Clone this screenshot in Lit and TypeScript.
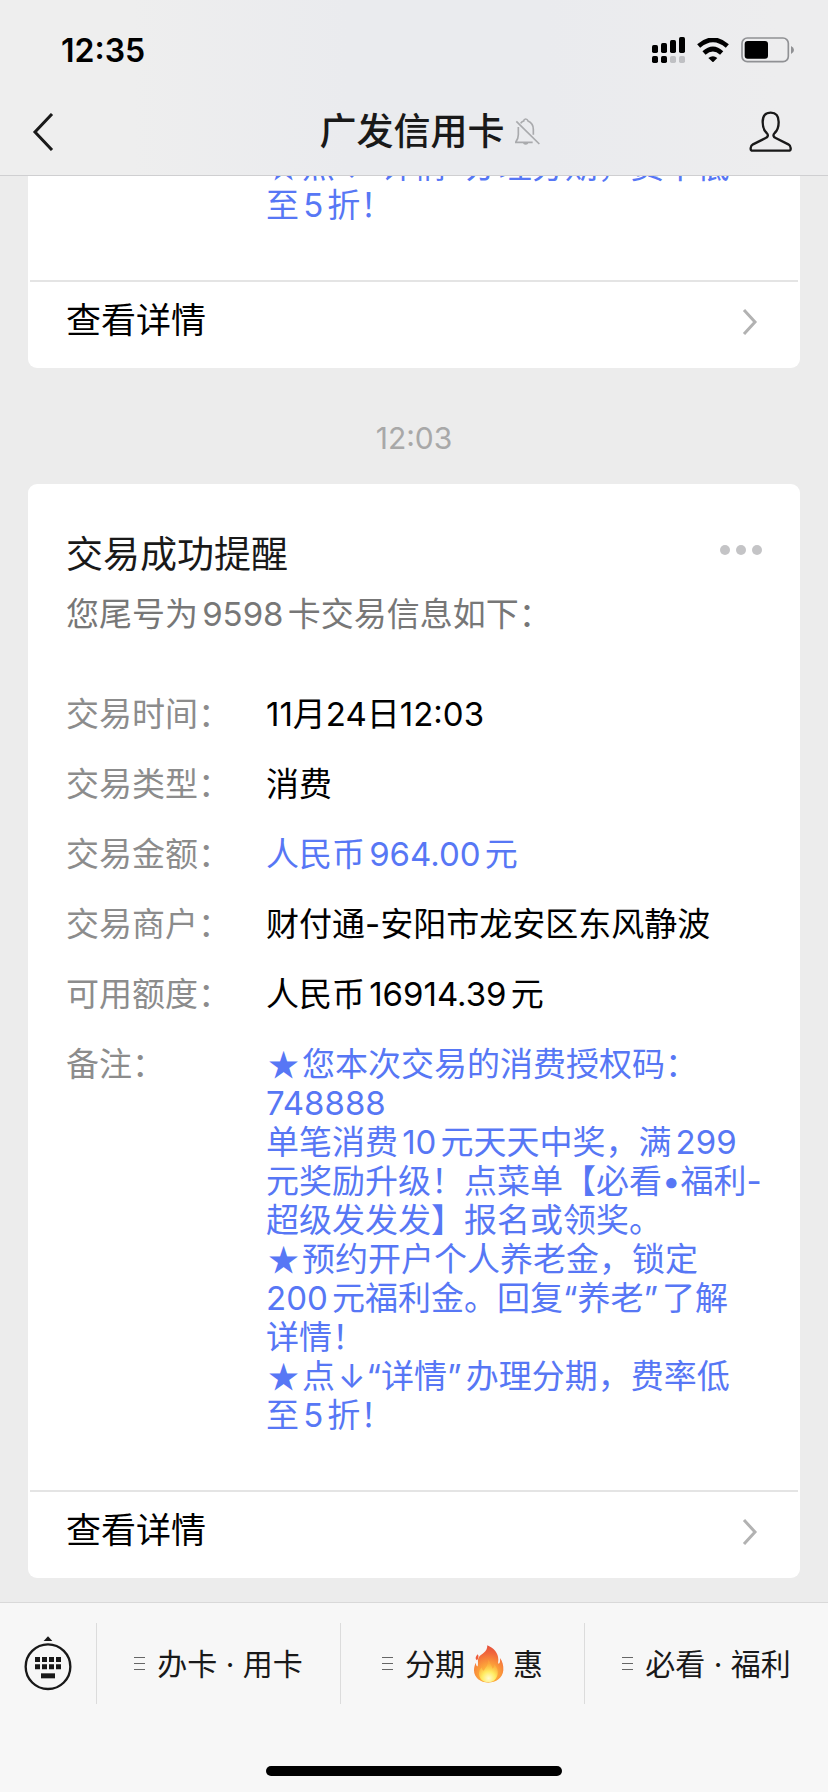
import { LitElement, html, css, svg, nothing } from "lit";
import { customElement, property } from "lit/decorators.js";

interface Row {
  label: string;
  lines: string[];
  accent?: boolean;
  tight?: boolean;
}

const tail = ["★点↓“详情”办理分期，费率低", "至5折！"];

const rows: Row[] = [
  { label: "交易时间：", lines: ["11月24日12:03"], tight: true },
  { label: "交易类型：", lines: ["消费"] },
  { label: "交易金额：", lines: ["人民币964.00元"], accent: true },
  { label: "交易商户：", lines: ["财付通-安阳市龙安区东风静波"] },
  { label: "可用额度：", lines: ["人民币16914.39元"] },
  {
    label: "备注：",
    accent: true,
    lines: [
      "★您本次交易的消费授权码：",
      "748888",
      "单笔消费10元天天中奖，满299",
      "元奖励升级！点菜单【必看•福利-",
      "超级发发发】报名或领奖。",
      "★预约开户个人养老金，锁定",
      "200元福利金。回复“养老”了解",
      "详情！",
      ...tail,
    ],
  },
];

const symbolClass: Record<string, string> = {
  "★": "star",
  "↓": "arrow",
  "”": "close",
};

const bars = [129, 123, 114, 105];

@customElement("status-bar")
class StatusBar extends LitElement {
  static styles = css`
    :host {
      display: flex;
      align-items: center;
      justify-content: space-between;
      height: 76px;
      padding: 12px 34px 0 61px;
    }
    .time {
      font-size: 32px;
      font-weight: 600;
      color: #000;
    }
    .icons {
      display: flex;
      align-items: center;
      gap: 12px;
    }
    svg {
      display: block;
    }
  `;
  render() {
    return html`
      <span class="time">12:35</span>
      <div class="icons">
        <svg width="33" height="26" viewBox="717 105 99 78" aria-label="信号">
          ${bars.map(
            (top, i) => svg`
              <rect x=${717 + i * 27} y=${top} width="18" height=${153 - top} rx="5" />
              <rect x=${717 + i * 27} y="162" width="18" height="21" rx="5" fill=${i > 1 ? "#bfc0c3" : "#000"} />`
          )}
        </svg>
        <svg width="32" height="24" viewBox="851 111 96 72" aria-label="无线网络">
          <path d="M856 135Q899 98 942 135" fill="none" stroke="#000" stroke-width="14" />
          <path d="M872 156Q899 132 925 156" fill="none" stroke="#000" stroke-width="14" />
          <path d="M885 171Q899 160 912 171L899 184Z" />
        </svg>
        <svg width="53" height="26" viewBox="981 110 159 78" aria-label="电量">
          <rect x="984" y="113" width="139" height="71" rx="16" fill="none" stroke="#909194" stroke-width="5" />
          <rect x="992" y="122" width="70" height="53" rx="9" />
          <path d="M1131 137Q1140 141 1140 149T1131 161Z" fill="#909194" />
        </svg>
      </div>
    `;
  }
}

@customElement("nav-bar")
class NavBar extends LitElement {
  static styles = css`
    :host {
      display: grid;
      grid-template-columns: 1fr auto 1fr;
      align-items: center;
      height: 87px;
      padding: 0 36px 0 32px;
    }
    .title {
      margin: 0;
      font-size: 37px;
      line-height: 48px;
      font-weight: 500;
      color: #191919;
    }
    .side {
      display: flex;
      align-items: center;
      justify-content: space-between;
      padding-left: 10px;
    }
    .btn {
      display: block;
      padding: 0;
      border: 0;
      background: none;
      justify-self: start;
    }
    svg {
      display: block;
    }
  `;
  render() {
    return html`
      <button class="btn" aria-label="返回">
        <svg width="22" height="38" viewBox="0 0 22 38" fill="none" stroke="#191919" stroke-width="3">
          <path d="M20 1 3 19 20 37" />
        </svg>
      </button>
      <h1 class="title">广发信用卡</h1>
      <div class="side">
        <svg width="26" height="28" viewBox="301 354 78 84" fill="none" stroke="#a9aaad" stroke-width="5" aria-label="消息免打扰">
          <path d="M305 364 374 432M311 381V404Q311 416 303 427H354M318 370Q321 365 327 363Q328 357 333 357Q338 357 340 363Q356 370 356 388V404M327 429Q333 434 339 429" />
        </svg>
        <button class="btn" aria-label="账户主页">
          <svg width="43" height="42" viewBox="1003 332 129 126" fill="none" stroke="#191919" stroke-width="7" stroke-linejoin="round">
            <path d="M1068 337C1051 337 1044 349 1044 365C1044 381 1048 391 1056 398C1062 404 1060 410 1053 413L1015 432Q1008 436 1008 443V446Q1008 451 1014 451H1122Q1128 451 1128 446V443Q1128 436 1121 432L1083 413C1076 410 1074 404 1080 398C1088 391 1092 381 1092 365C1092 349 1085 337 1068 337Z" />
          </svg>
        </button>
      </div>
    `;
  }
}

@customElement("notice-card")
class NoticeCard extends LitElement {
  @property() heading = "";
  @property() intro = "";
  @property({ attribute: false }) rows: Row[] = [];

  static styles = css`
    :host {
      display: block;
      flex: none;
      margin: 0 28px;
      border-radius: 9px;
      background: #fff;
    }
    .head {
      display: flex;
      justify-content: space-between;
      padding: 46px 38px 0;
    }
    .heading {
      margin: 0;
      font-size: 37px;
      line-height: 50px;
      font-weight: 400;
      color: #191919;
    }
    .more {
      display: flex;
      align-items: center;
      align-self: flex-start;
      gap: 6px;
      height: 40px;
      padding: 0;
      border: 0;
      background: none;
    }
    .dot {
      width: 10px;
      height: 10px;
      border-radius: 50%;
      background: #c4c4c6;
    }
    .intro {
      margin: 15px 38px 61px;
      font-size: 33px;
      line-height: 39px;
      color: #777;
    }
    .rows {
      display: grid;
      grid-template-columns: 200px 1fr;
      row-gap: 31px;
      margin: 0;
      padding: 0 0 55px 38px;
      font-size: 33px;
      line-height: 39px;
    }
    .label {
      color: #8c8c8c;
    }
    .value {
      margin: 0;
      white-space: pre;
      color: #000;
    }
    .accent {
      color: #5777f5;
    }
    .tight {
      text-autospace: no-autospace;
    }
    .star {
      padding: 0 3px 0 2px;
      font-family: "Noto Sans CJK SC", sans-serif;
      font-size: 31px;
      font-weight: 700;
      line-height: 0;
    }
    .arrow {
      padding: 0 1px 0 3px;
    }
    .close {
      padding-right: 4px;
    }
    .link {
      display: flex;
      align-items: center;
      justify-content: space-between;
      margin: 0 2px;
      padding: 0 40px 10px 36px;
      border-top: 2px solid #e4e4e4;
      font-size: 35px;
      line-height: 76px;
      color: #000;
      text-decoration: none;
    }
    .chevron {
      padding-top: 4px;
    }
  `;
  mark(text: string) {
    return text
      .split(/([★↓”])/)
      .map((part) => (symbolClass[part] ? html`<span class=${symbolClass[part]}>${part}</span>` : part));
  }
  render() {
    return html`
      ${this.heading
        ? html`<div class="head">
              <h2 class="heading">${this.heading}</h2>
              <button class="more" aria-label="更多">
                <span class="dot"></span><span class="dot"></span><span class="dot"></span>
              </button>
            </div>
            <p class="intro">${this.intro}</p>`
        : nothing}
      <dl class="rows">
        ${this.rows.map(
          (r) => html`<dt class="label">${r.label}</dt>
            <dd class="value ${r.accent ? "accent" : ""} ${r.tight ? "tight" : ""}">${this.mark(r.lines.join("\n"))}</dd>`
        )}
      </dl>
      <a class="link" href="#detail">
        查看详情
        <svg class="chevron" width="16" height="28" viewBox="0 0 16 28" fill="none" stroke="#b2b2b2" stroke-width="3">
          <path d="M2 2 13 14 2 26" />
        </svg>
      </a>
    `;
  }
}

@customElement("menu-bar")
class MenuBar extends LitElement {
  static styles = css`
    :host {
      display: block;
      border-top: 1px solid #d9d9d9;
      background: #f7f7f7;
      padding-bottom: 16px;
    }
    .menu {
      display: grid;
      grid-template-columns: 96px 1fr 1fr 1fr;
      padding: 20px 0 62px;
    }
    .item {
      display: flex;
      align-items: center;
      justify-content: center;
      gap: 12px;
      height: 81px;
      padding: 0;
      border: 0;
      border-left: 1px solid #dcdcdc;
      background: none;
      font: inherit;
      color: #191919;
      white-space: pre;
    }
    .keyboard {
      border-left: 0;
    }
    .text {
      display: flex;
      align-items: center;
      padding-bottom: 4px;
      font-size: 30px;
    }
    .flame {
      margin: 0 8px;
      padding-top: 4px;
    }
    .home {
      width: 296px;
      height: 10px;
      margin: 0 auto;
      border-radius: 5px;
      background: #000;
    }
  `;
  lines() {
    return html`<svg width="11" height="13" viewBox="0 0 11 13" stroke="#666" stroke-width="1">
      <path d="M0 .5H11M0 6.5H11M0 12.5H11" />
    </svg>`;
  }
  render() {
    return html`
      <nav class="menu">
        <button class="item keyboard" aria-label="键盘">
          <svg width="48" height="56" viewBox="72 134 144 168" fill="#191919">
            <path d="M131 149 144 135 157 149Z" />
            <circle cx="144" cy="226" r="67" fill="none" stroke="#191919" stroke-width="7" />
            ${[0, 1, 2, 3].map(
              (i) => svg`<path d="M${105 + i * 21} 197h15v15h-15zM${105 + i * 21} 219h15v15h-15z" />`
            )}
            <path d="M123 246h42v15h-42z" />
          </svg>
        </button>
        <button class="item">${this.lines()}<span class="text">办卡 · 用卡</span></button>
        <button class="item">
          ${this.lines()}<span class="text"
            >分期<svg class="flame" width="32" height="38" viewBox="176 162 96 114" role="img" aria-label="火">
              <defs>
                <radialGradient id="outer" cx="223" cy="250" r="85" gradientUnits="userSpaceOnUse">
                  <stop offset="0" stop-color="#ffd23e" />
                  <stop offset=".4" stop-color="#fb9a3a" />
                  <stop offset=".75" stop-color="#f1673c" />
                  <stop offset="1" stop-color="#e4523c" />
                </radialGradient>
                <radialGradient id="inner" cx="223" cy="262" r="45" gradientUnits="userSpaceOnUse">
                  <stop offset="0" stop-color="#fffbd0" />
                  <stop offset=".45" stop-color="#ffec62" />
                  <stop offset="1" stop-color="#fdb13c" stop-opacity=".5" />
                </radialGradient>
              </defs>
              <path fill="url(#outer)" d="M219 163C239 172 252 186 252 206C252 212 250 216 253 218C257 218 258 208 257 201C264 210 268 224 267 238C265 261 245 275 222 275C198 275 179 260 179 238C179 228 182 221 184 215C185 222 187 226 190 226C193 217 188 207 194 198C201 188 219 185 219 163Z" />
              <path fill="#ee5c3c" d="M190 190C194 194 193 203 188 208C182 205 183 197 190 190Z" />
              <path fill="url(#inner)" d="M222 206C229 216 231 224 235 233C239 230 240 225 240 220C248 229 252 239 250 250C246 267 235 274 222 274C207 274 195 265 194 250C193 241 197 234 202 229C203 234 205 238 208 239C214 230 222 222 222 206Z" /></svg
            >惠</span
          >
        </button>
        <button class="item">${this.lines()}<span class="text">必看 · 福利</span></button>
      </nav>
      <div class="home"></div>
    `;
  }
}

@customElement("app-root")
class AppRoot extends LitElement {
  static styles = css`
    :host {
      display: flex;
      flex-direction: column;
      height: 100vh;
      background: #ececec;
      font-family: Inter, "Noto Sans CJK SC", sans-serif;
      text-autospace: normal;
    }
    .top {
      border-bottom: 1px solid #cfcfd1;
      background: linear-gradient(90deg, #eee 0%, #eee 16%, #eaebee 42%, #eaebee 66%, #ededee 94%);
    }
    .chat {
      display: flex;
      flex: 1;
      flex-direction: column;
      justify-content: flex-end;
      min-height: 0;
      overflow: hidden;
      padding-bottom: 24px;
    }
    .stamp {
      margin: 53px 0 29px;
      font-size: 30px;
      line-height: 34px;
      text-align: center;
      color: #a8a8a8;
    }
  `;
  render() {
    return html`
      <header class="top">
        <status-bar></status-bar>
        <nav-bar></nav-bar>
      </header>
      <main class="chat">
        <notice-card .rows=${[{ label: "", lines: tail, accent: true }]}></notice-card>
        <time class="stamp">12:03</time>
        <notice-card heading="交易成功提醒" intro="您尾号为9598卡交易信息如下：" .rows=${rows}></notice-card>
      </main>
      <menu-bar></menu-bar>
    `;
  }
}
